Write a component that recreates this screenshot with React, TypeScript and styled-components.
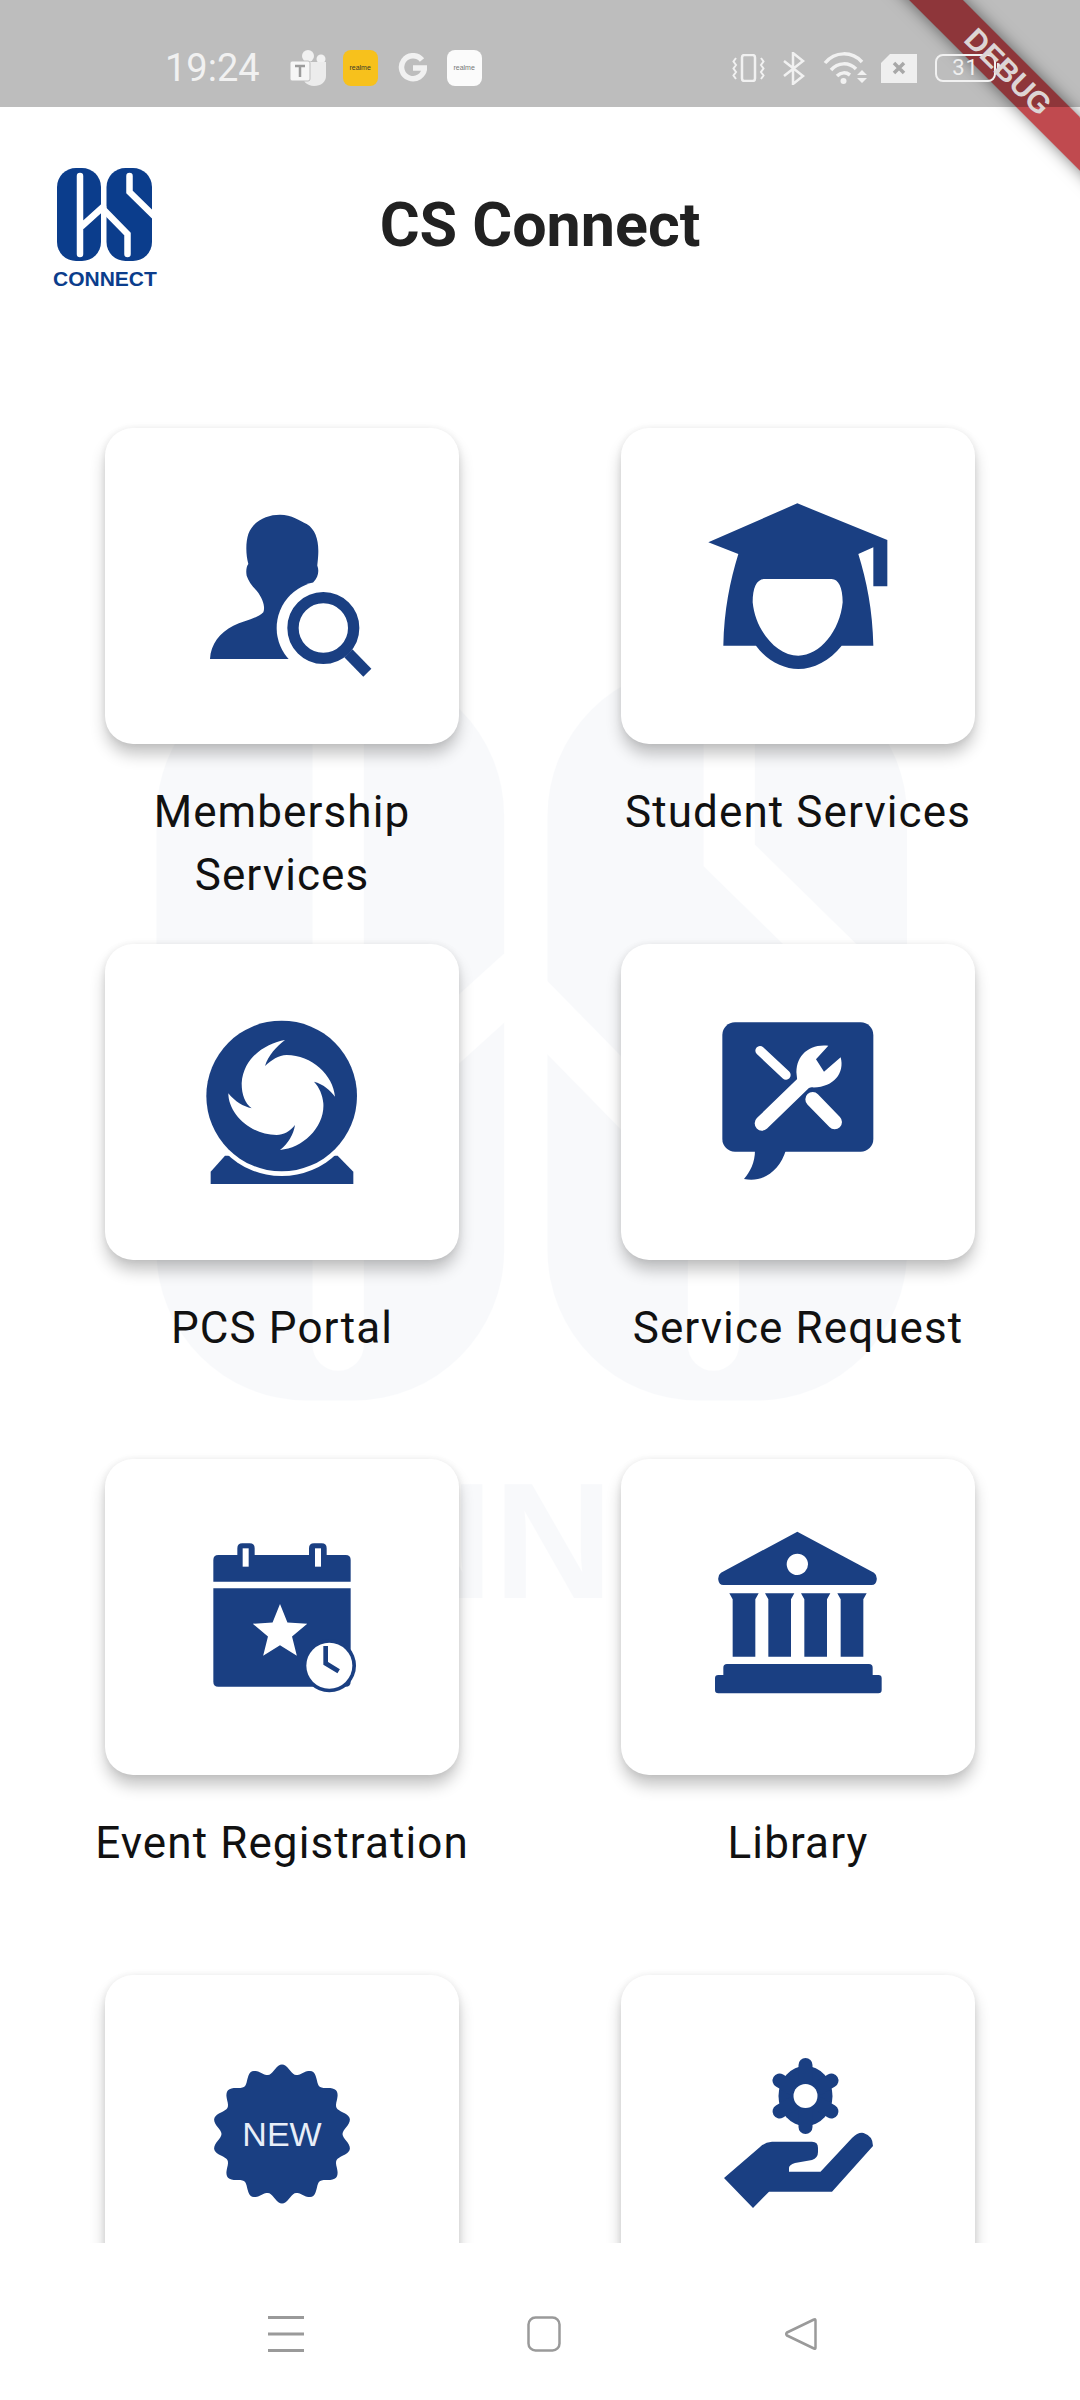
import React from 'react';
import styled, { createGlobalStyle } from 'styled-components';

const BLUE = '#1a3f82';

const GlobalStyle = createGlobalStyle`
  html, body {
    margin: 0;
    padding: 0;
    background: #fff;
  }
`;

const Page = styled.div`
  position: relative;
  width: 1080px;
  height: 2400px;
  display: flex;
  flex-direction: column;
  overflow: hidden;
  background: #fff;
  font-family: Roboto, 'Liberation Sans', sans-serif;
`;

const StatusBar = styled.div`
  position: relative;
  z-index: 3;
  flex: none;
  height: 107px;
  box-sizing: border-box;
  padding: 39px 80px 10px 165px;
  display: flex;
  align-items: center;
  background: rgba(0, 0, 0, 0.26);
`;

const Time = styled.span`
  color: #f1f1f1;
  font-size: 38px;
  line-height: 40px;
  margin-right: 30px;
`;

const NotifyIcons = styled.div`
  display: flex;
  align-items: center;
`;

const SystemIcons = styled.div`
  margin-left: auto;
  display: flex;
  align-items: center;
`;

const AppTile = styled.div<{ $bg: string; $color: string; $gap: number }>`
  width: 35px;
  height: 36px;
  margin-left: ${p => p.$gap}px;
  border-radius: 8px;
  background: ${p => p.$bg};
  color: ${p => p.$color};
  font-family: 'Liberation Sans', sans-serif;
  font-size: 7px;
  line-height: 8px;
  text-align: center;
  display: flex;
  flex-direction: column;
  align-items: center;
  justify-content: center;
`;

const Gap = styled.span<{ $w: number }>`
  flex: none;
  width: ${p => p.$w}px;
`;

const Battery = styled.div`
  width: 61px;
  height: 28px;
  box-sizing: border-box;
  border: 2px solid #f1f1f1;
  border-radius: 8px;
  color: #efefef;
  font-size: 22px;
  line-height: 24px;
  text-align: center;
  letter-spacing: 1px;
`;

const BatteryTip = styled.span`
  width: 3px;
  height: 10px;
  margin-left: 1px;
  background: #e8e8e8;
  border-radius: 0 2px 2px 0;
`;

const DebugStrip = styled.div`
  position: absolute;
  z-index: 2;
  left: 808px;
  top: 53px;
  width: 400px;
  height: 38px;
  transform: rotate(45deg);
  background: rgba(178, 34, 40, 0.82);
  box-shadow: 0 0 16px rgba(0, 0, 0, 0.5);
`;

const DebugText = styled.div`
  position: absolute;
  z-index: 4;
  left: 808px;
  top: 53px;
  width: 400px;
  height: 38px;
  transform: rotate(45deg);
  color: #ddd5d5;
  font-family: 'Liberation Sans', sans-serif;
  font-weight: 700;
  font-size: 30px;
  line-height: 38px;
  text-align: center;
`;

const Watermark = styled.div`
  position: absolute;
  left: 117px;
  top: 650px;
  opacity: 0.024;
`;

const Header = styled.header`
  flex: none;
  height: 213px;
  box-sizing: border-box;
  padding: 59px 52px 0;
  display: grid;
  grid-template-columns: 1fr auto 1fr;
  align-items: start;
`;

const Title = styled.h1`
  margin: 27px 0 0;
  color: #212121;
  font-size: 61px;
  line-height: 64px;
  font-weight: 700;
`;

const Main = styled.main`
  position: relative;
  z-index: 1;
  flex: 1;
  min-height: 0;
  overflow: hidden;
`;

const Grid = styled.div`
  padding: 108px 105px 0;
  display: grid;
  grid-template-columns: 354px 354px;
  grid-auto-rows: 515.67px;
  column-gap: 162px;
`;

const Item = styled.div`
  display: flex;
  flex-direction: column;
  align-items: center;
`;

const Card = styled.div`
  flex: none;
  width: 354px;
  height: 316px;
  border-radius: 28px;
  background: #fff;
  display: flex;
  align-items: center;
  justify-content: center;
  box-shadow: 0 11px 16px -1px rgba(0, 0, 0, 0.24), 0 0 7px rgba(0, 0, 0, 0.07);
`;

const Label = styled.div`
  flex: none;
  width: 392px;
  margin-top: 37px;
  color: #111;
  font-size: 44px;
  line-height: 63px;
  letter-spacing: 1.1px;
  text-align: center;
`;

const NavBar = styled.nav`
  flex: none;
  height: 157px;
  box-sizing: border-box;
  padding: 73px 0 0 268px;
  background: #fff;
  display: flex;
  align-items: flex-start;
  gap: 223px;
`;

const Logo = ({ scale = 1 }: { scale?: number }) => (
  <svg width={108 * scale} height={126 * scale} viewBox="52 166 108 126">
    <rect x="57" y="168" width="44" height="93" rx="19" fill="#0b3d8c" />
    <rect x="106.500" y="168" width="45.500" height="93" rx="19" fill="#0b3d8c" />
    <path d="M80 176V254M82 226L103 207" stroke="#fff" strokeWidth="6.500" strokeLinecap="round" fill="none" />
    <path d="M129.500 176V192L154 216M104 210L127.500 234V254" stroke="#fff" strokeWidth="6.500" strokeLinecap="round" fill="none" />
    <text x="53" y="286" fontFamily="'Liberation Sans', sans-serif" fontWeight="700" fontSize="21" fill="#0b3d8c">
      CONNECT
    </text>
  </svg>
);

const IconBox = ({ box, children }: { box: string; children: React.ReactNode }) => (
  <svg width="240" height="240" viewBox={box}>
    {children}
  </svg>
);

const MemberIcon = () => (
  <IconBox box="246 166 720 720">
    <path
      fill={BLUE}
      d="M390 745C392 700 420 665 460 645C490 630 530 625 550 605C556 590 550 565 530 540C515 525 505 510 500 495C497 480 500 465 505 460C497 430 497 395 505 370C520 330 560 312 600 312C635 312 660 330 680 340C705 355 715 385 715 420C715 440 712 460 712 465C718 480 715 500 700 515L700 745Z"
    />
    <circle cx="730" cy="652" r="140" fill="#fff" />
    <circle cx="730" cy="652" r="91" fill="none" stroke={BLUE} strokeWidth="34" />
    <path d="M805 728L862 786" stroke={BLUE} strokeWidth="34" />
  </IconBox>
);

const StudentIcon = () => (
  <IconBox box="234 166 720 720">
    <path
      fill={BLUE}
      fillRule="evenodd"
      d="M592 278L862 388V527H820V410L775 430C800 510 818 600 820 705H725C690 750 640 775 595 775C550 775 500 750 468 705H370C372 600 390 510 415 430L325 395ZM495 505C470 505 458 530 458 575C466 660 530 735 595 735C660 735 720 660 728 575C728 530 715 505 695 505Z"
    />
  </IconBox>
);

const PortalIcon = () => (
  <IconBox box="6 6 720 720">
    <path fill={BLUE} d="M195 527L152 575V612H580V575L533 527Z" />
    <circle cx="365" cy="350" r="238" fill="#fff" />
    <circle cx="365" cy="348" r="226" fill={BLUE} />
    <path
      fill="#fff"
      d="M375 180C320 190 250 230 245 310C245 345 255 370 275 385C250 380 225 365 205 340C205 400 270 465 350 465C370 465 390 455 405 435C400 465 385 490 360 510C430 505 495 440 490 370C488 345 478 322 462 305C490 312 510 330 525 350C520 285 455 225 380 225C355 225 335 240 315 258C325 225 350 200 375 180Z"
    />
  </IconBox>
);

const ServiceIcon = () => (
  <IconBox box="-6 6 720 720">
    <rect x="127" y="127" width="453" height="388" rx="38" fill={BLUE} />
    <path fill={BLUE} d="M225 510C225 550 210 575 192 597C250 610 300 570 318 510Z" />
    <path d="M240 212L318 285" stroke="#fff" strokeWidth="28" strokeLinecap="round" />
    <path d="M398 358L464 426" stroke="#fff" strokeWidth="44" strokeLinecap="round" />
    <path d="M246 430L380 300" stroke="#fff" strokeWidth="44" strokeLinecap="round" />
    <path fill="#fff" d="M350 285C345 230 385 190 445 197L408 238L432 275L482 232C495 280 460 325 395 322L355 330Z" />
  </IconBox>
);

const starPoints = (cx: number, cy: number, R: number, r: number) =>
  Array.from({ length: 10 }, (_, i) => {
    const a = (-90 + i * 36) * (Math.PI / 180);
    const rad = i % 2 ? r : R;
    return `${(cx + rad * Math.cos(a)).toFixed(1)},${(cy + rad * Math.sin(a)).toFixed(1)}`;
  }).join(' ');

const EventIcon = () => (
  <IconBox box="6 -9 720 720">
    <path fill={BLUE} d="M160 245V180Q160 165 175 165H232V145Q232 130 247 130H269Q284 130 284 145V165H447V145Q447 130 462 130H485Q500 130 500 145V165H557Q572 165 572 180V245Z" />
    <rect x="248" y="145" width="18" height="55" fill="#fff" />
    <rect x="465" y="145" width="18" height="55" fill="#fff" />
    <path fill={BLUE} d="M160 265H572V545Q572 560 557 560H175Q160 560 160 545Z" />
    <polygon fill="#fff" points={starPoints(360, 398, 86, 38)} />
    <circle cx="508" cy="497" r="80" fill={BLUE} />
    <circle cx="508" cy="497" r="69" fill="#fff" />
    <path d="M497 438V490L536 514" fill="none" stroke={BLUE} strokeWidth="14" />
  </IconBox>
);

const LibraryIcon = () => (
  <IconBox box="-6 -9 720 720">
    <path fill={BLUE} fillRule="evenodd" d="M352 95L582 218Q592 225 590 240Q588 255 575 255H130Q117 255 115 240Q113 225 123 218ZM352 161A32 32 0 1 0 352.100 225A32 32 0 1 0 352 161Z" />
    {[148, 255, 363, 472].map(x => (
      <path key={x} fill={BLUE} d={`M${x} 280H${x + 88}L${x + 78} 298V470H${x + 10}V298Z`} />
    ))}
    <path fill={BLUE} d="M130 503Q130 492 141 492H567Q578 492 578 503V525H595Q605 525 605 535V570Q605 580 595 580H115Q105 580 105 570V535Q105 525 115 525H130Z" />
  </IconBox>
);

const badgePath = (cx: number, cy: number) => {
  const pts = Array.from({ length: 240 }, (_, i) => {
    const a = (i / 240) * Math.PI * 2;
    const r = 65 + 4.5 * Math.cos(14 * a);
    return `${(cx + r * Math.sin(a)).toFixed(1)} ${(cy - r * Math.cos(a)).toFixed(1)}`;
  });
  return `M${pts.join('L')}Z`;
};

const NewIcon = () => (
  <IconBox box="162 2013 240 240">
    <path fill={BLUE} d={badgePath(282, 2134)} />
    <text x="282" y="2146" textAnchor="middle" fontFamily="'Liberation Sans', sans-serif" fontSize="34" fill="#e8eef8">
      NEW
    </text>
  </IconBox>
);

const CareIcon = () => (
  <IconBox box="678 2013 240 240">
    <ellipse cx="805.500" cy="2096" rx="27" ry="30" fill={BLUE} />
    {[0, 60, 120].map(a => (
      <line
        key={a}
        x1={805.5 + 30 * Math.sin((a * Math.PI) / 180)}
        y1={2096 - 31 * Math.cos((a * Math.PI) / 180)}
        x2={805.5 - 30 * Math.sin((a * Math.PI) / 180)}
        y2={2096 + 31 * Math.cos((a * Math.PI) / 180)}
        stroke={BLUE}
        strokeWidth="14"
        strokeLinecap="round"
      />
    ))}
    <circle cx="805.500" cy="2096" r="12" fill="#fff" />
    <path
      fill={BLUE}
      d="M772 2141.700H812Q818 2141.700 818 2148V2152Q818 2158 812 2160L795 2163Q789 2165 789 2168V2171.700H820.500L852 2138Q858 2132 863.600 2133Q873 2136 873 2146L832 2191.700H769L753 2208L724 2178L760 2147Q765 2142 772 2141.700Z"
    />
  </IconBox>
);

const TeamsIcon = () => (
  <svg width="37" height="36" viewBox="0 0 37 36">
    <circle cx="18" cy="6" r="6" fill="#f1f1f1" />
    <circle cx="31" cy="9" r="4.500" fill="#f1f1f1" />
    <path d="M12 12H36V26C36 32 31 36 24 36C17 36 12 31 12 24Z" fill="#ececec" />
    <rect x="0" y="11" width="20" height="20" rx="2" fill="#f6f6f6" stroke="#bdbdbd" strokeWidth="1" />
    <path d="M5 16H15M10 16V27" stroke="#9c9c9c" strokeWidth="2.500" />
  </svg>
);

const GoogleIcon = () => (
  <svg width="29" height="30" viewBox="0 0 29 30">
    <path d="M24 7A11.500 11.500 0 1 0 26.500 15H15" fill="none" stroke="#f1f1f1" strokeWidth="5.500" />
  </svg>
);

const VibrateIcon = () => (
  <svg width="33" height="28" viewBox="0 0 33 28" fill="none" stroke="#f1f1f1">
    <rect x="10" y="1" width="13" height="26" rx="2.500" strokeWidth="2.500" />
    <path d="M4 4L1.500 7.500L4 11L1.500 14.500L4 18L1.500 21.500L4 25M29 4L31.500 7.500L29 11L31.500 14.500L29 18L31.500 21.500L29 25" strokeWidth="2" />
  </svg>
);

const BluetoothIcon = () => (
  <svg width="22" height="33" viewBox="0 0 22 33" fill="none" stroke="#f1f1f1" strokeWidth="2.500">
    <path d="M1 9L20 24L10 32V1L20 9L1 24" />
  </svg>
);

const WifiIcon = () => (
  <svg width="45" height="34" viewBox="0 0 45 34">
    <g fill="none" stroke="#f1f1f1" strokeWidth="3.500">
      <path d="M2 12C12 0 29 0 39 11" />
      <path d="M8 19C15 11 26 11 33 18" />
      <path d="M14 25C18 21 23 21 27 24" />
    </g>
    <circle cx="20.500" cy="30" r="3" fill="#f1f1f1" />
    <path d="M34 24L39 19L44 24ZM34 27L39 32L44 27Z" fill="#f1f1f1" />
  </svg>
);

const SimIcon = () => (
  <svg width="36" height="29" viewBox="0 0 36 29">
    <path d="M9 0H36V29H0V9Z" fill="#efefef" />
    <path d="M13 9L23 19M23 9L13 19" stroke="#a8a8a8" strokeWidth="3.500" />
  </svg>
);

const MenuIcon = () => (
  <svg width="36" height="36" viewBox="0 0 36 36">
    <path d="M0 1.500H36M0 18H36M0 34.500H36" stroke="#9a9a9a" strokeWidth="3" />
  </svg>
);

const HomeIcon = () => (
  <svg width="34" height="36" viewBox="0 0 34 36">
    <rect x="1.500" y="1.500" width="31" height="33" rx="7" fill="none" stroke="#9a9a9a" strokeWidth="2.500" />
  </svg>
);

const BackIcon = () => (
  <svg width="33" height="36" viewBox="0 0 33 36">
    <path d="M30 3.500Q31.500 2.500 31.500 4.500V31.500Q31.500 33.500 30 32.500L3 19.500Q1.500 18 3 16.500Z" fill="none" stroke="#9a9a9a" strokeWidth="2.500" strokeLinejoin="round" />
  </svg>
);

const tiles: { label?: string; icon: React.ReactNode }[] = [
  { label: 'Membership Services', icon: <MemberIcon /> },
  { label: 'Student Services', icon: <StudentIcon /> },
  { label: 'PCS Portal', icon: <PortalIcon /> },
  { label: 'Service Request', icon: <ServiceIcon /> },
  { label: 'Event Registration', icon: <EventIcon /> },
  { label: 'Library', icon: <LibraryIcon /> },
  { icon: <NewIcon /> },
  { icon: <CareIcon /> },
];

export default function App() {
  return (
    <Page>
      <GlobalStyle />
      <Watermark>
        <Logo scale={7.9} />
      </Watermark>
      <DebugStrip />
      <DebugText>DEBUG</DebugText>
      <StatusBar>
        <Time>19:24</Time>
        <NotifyIcons>
          <TeamsIcon />
          <AppTile $bg="#f7c11c" $color="#3a3a2a" $gap={16}>
            realme
          </AppTile>
          <Gap $w={20} />
          <GoogleIcon />
          <AppTile $bg="#fbfbfb" $color="#777" $gap={20}>
            realme
          </AppTile>
        </NotifyIcons>
        <SystemIcons>
          <VibrateIcon />
          <Gap $w={18} />
          <BluetoothIcon />
          <Gap $w={18} />
          <WifiIcon />
          <Gap $w={13} />
          <SimIcon />
          <Gap $w={18} />
          <Battery>31</Battery>
          <BatteryTip />
        </SystemIcons>
      </StatusBar>
      <Header>
        <Logo />
        <Title>CS Connect</Title>
      </Header>
      <Main>
        <Grid>
          {tiles.map((t, i) => (
            <Item key={i}>
              <Card>{t.icon}</Card>
              {t.label && <Label>{t.label}</Label>}
            </Item>
          ))}
        </Grid>
      </Main>
      <NavBar>
        <MenuIcon />
        <HomeIcon />
        <BackIcon />
      </NavBar>
    </Page>
  );
}
